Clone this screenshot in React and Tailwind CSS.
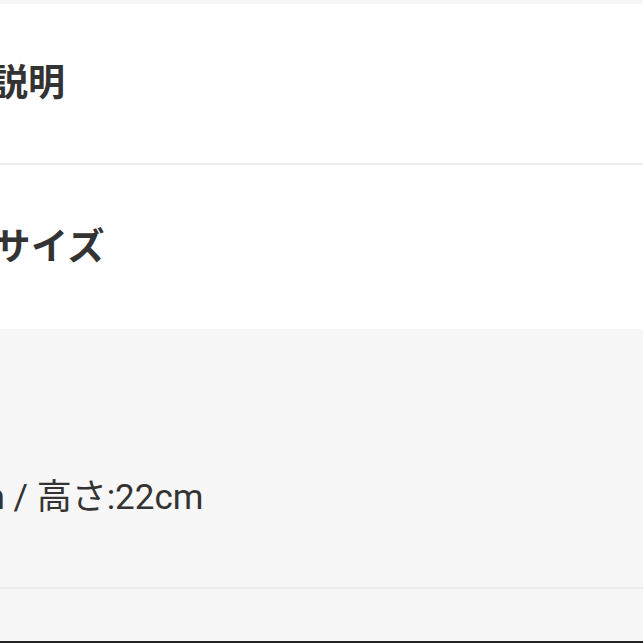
import React from 'react';

const font = "font-['Roboto','Noto_Sans_CJK_JP',sans-serif]";

const App = () => {
    return (
        <div className={`w-[643px] h-[643px] overflow-hidden bg-white text-[#333] ${font} flex flex-col`}>
            {/* top strip from previous block */}
            <div className="h-[4px] bg-[#f7f7f7]"></div>

            {/* description heading */}
            <section className="h-[161px] flex items-center border-b-2 border-[#eeeeee] bg-white">
                <h2 className="ml-[-120px] text-[37px] font-bold leading-none whitespace-nowrap">商品の説明</h2>
            </section>

            {/* size heading */}
            <section className="h-[164px] flex items-center bg-white">
                <h2 className="ml-[-119px] text-[37px] font-bold leading-none whitespace-nowrap tracking-[0.5px]">商品のサイズ</h2>
            </section>

            {/* size body */}
            <section className="h-[260px] flex items-center pt-[78px] border-b-2 border-[#ececec] bg-[#f7f7f7]">
                <p className="ml-[-127px] text-[35px] leading-none whitespace-nowrap">幅:30cm / 高さ:22cm</p>
            </section>

            <div className="flex-1 bg-[#f7f7f7]"></div>
            <div className="h-[2px] bg-[#222]"></div>
        </div>
    );
};

export default App;
